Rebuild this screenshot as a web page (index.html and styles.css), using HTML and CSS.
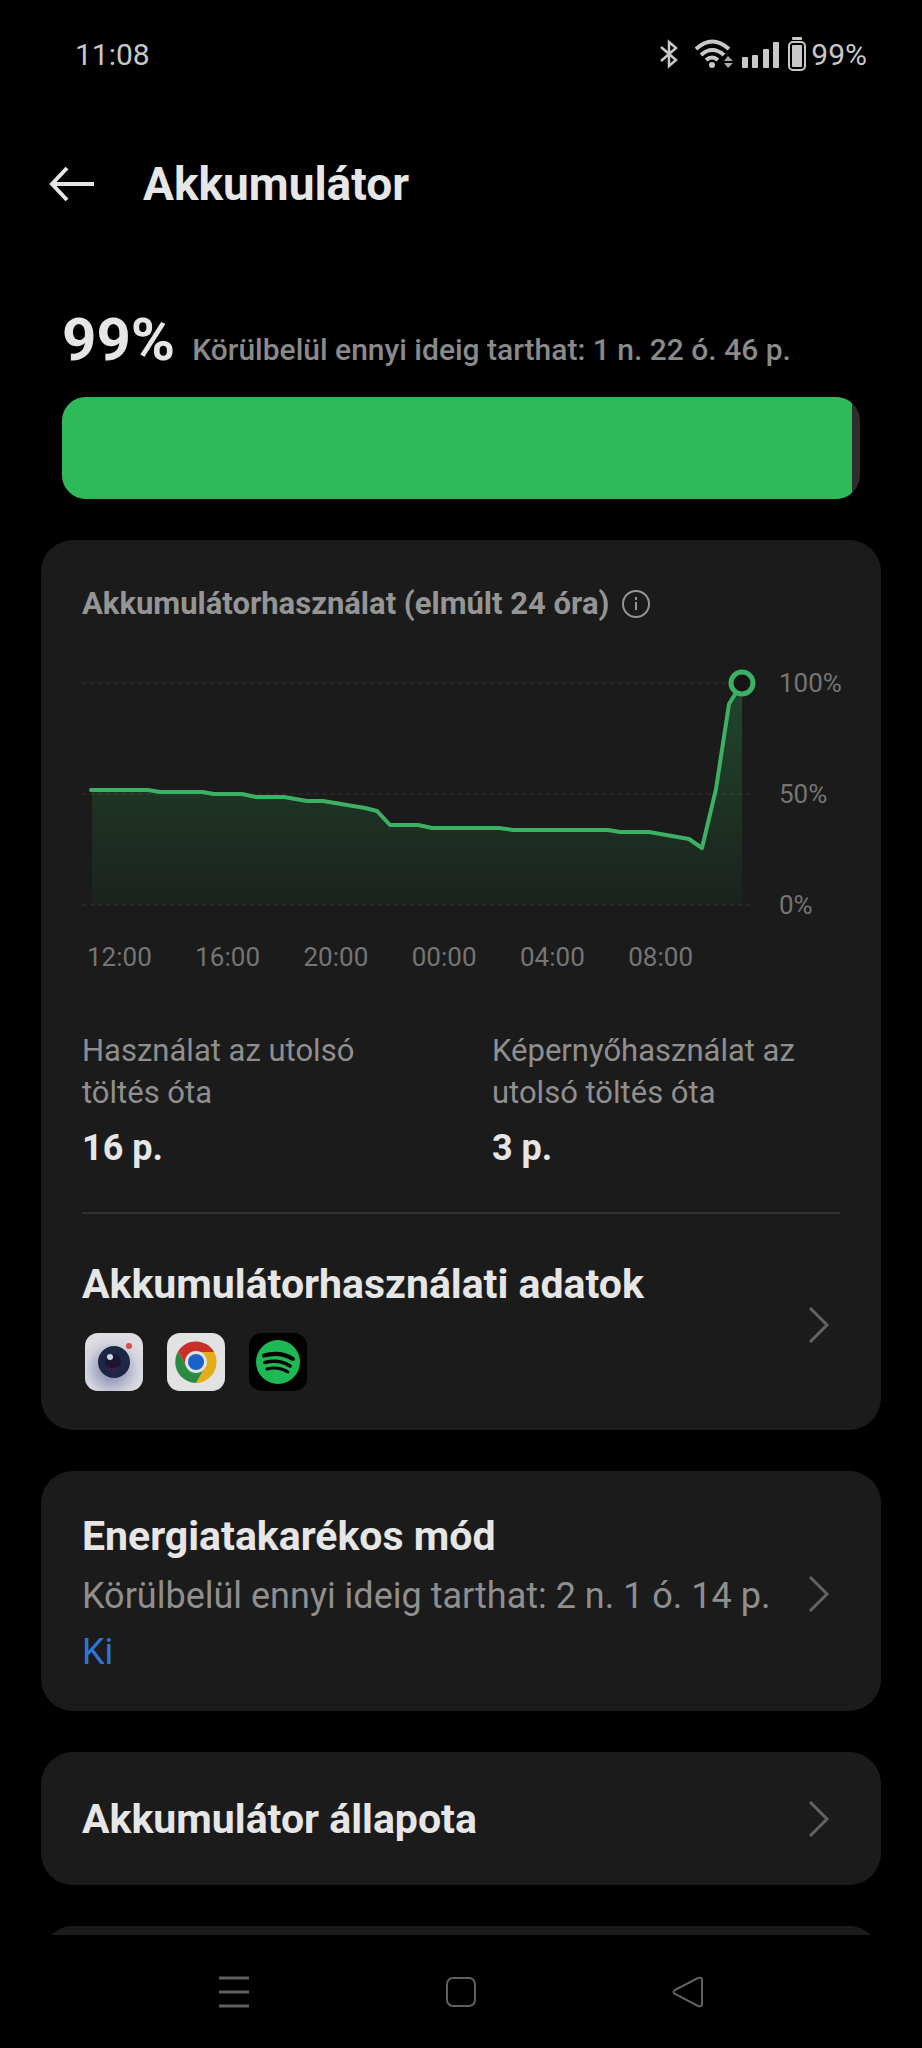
FILE: index.html
```html
<!DOCTYPE html>
<html lang="hu">
<head>
    <meta charset="UTF-8">
    <meta name="viewport" content="width=device-width, initial-scale=1.0">
    <title>Akkumulátor</title>
    <link rel="stylesheet" href="styles.css">
</head>
<body>
    <div class="status-bar">
        <span>11:08</span>
        <div class="status-icons">
            <svg class="bluetooth" width="20" height="30" viewBox="0 0 20 30" fill="none" stroke="currentColor" stroke-width="2.500">
                <path d="M2 8l15 13-7 6V3l7 6L2 22"/>
            </svg>
            <svg class="wifi" width="38" height="30" viewBox="0 0 38 30" fill="none" stroke="currentColor" stroke-width="4">
                <path d="M1 10Q17 -5 34 10M6 16Q17 6 29 16M11 21Q17 16 23 21"/>
                <circle cx="17" cy="26" r="3" fill="currentColor" stroke="none"/>
                <path d="M29 22l4-5 5 5zM29 24l4 5 5-5z" fill="#a8a8a8" stroke="none"/>
            </svg>
            <svg class="signal" width="38" height="30" viewBox="0 0 38 30" fill="currentColor">
                <rect x="0" y="18" width="6" height="11" rx="1"/>
                <rect x="10" y="16" width="6" height="13" rx="1"/>
                <rect x="21" y="10" width="6" height="19" rx="1"/>
                <rect x="31" y="3" width="6" height="26" rx="1"/>
            </svg>
            <svg class="battery" width="18" height="34" viewBox="0 0 18 34">
                <rect x="4" y="0" width="10" height="3" rx="1" fill="currentColor"/>
                <rect x="1" y="5" width="16" height="28" rx="4" fill="none" stroke="currentColor" stroke-width="2"/>
                <rect x="4" y="8" width="10" height="22" rx="1" fill="currentColor"/>
            </svg>
            <span>99%</span>
        </div>
    </div>

    <header>
        <button class="back" aria-label="Vissza">
            <svg width="46" height="36" viewBox="0 0 46 36" fill="none" stroke="currentColor" stroke-width="4">
                <path d="M46 18H4M19 2L4 18l15 16"/>
            </svg>
        </button>
        <h1>Akkumulátor</h1>
    </header>

    <main>
        <section class="level">
            <div class="level-text">
                <strong>99%</strong>
                <span>Körülbelül ennyi ideig tarthat: 1 n. 22 ó. 46 p.</span>
            </div>
            <div class="level-bar"><div class="level-fill" style="width: 99%"></div></div>
        </section>

        <section class="card usage">
            <h2>
                Akkumulátorhasználat (elmúlt 24 óra)
                <svg width="30" height="30" viewBox="0 0 30 30" fill="none" stroke="currentColor" stroke-width="2">
                    <circle cx="15" cy="15" r="13"/>
                    <path d="M15 13v8M15 8v3"/>
                </svg>
            </h2>
            <div class="chart">
                <div class="plot">
                    <svg viewBox="0 0 673 240">
                        <defs>
                            <linearGradient id="area" x1="0" y1="0" x2="0" y2="1">
                                <stop offset="0" stop-color="#2fba5a" stop-opacity="0.28"/>
                                <stop offset="1" stop-color="#2fba5a" stop-opacity="0.04"/>
                            </linearGradient>
                        </defs>
                        <path class="grid-line" d="M0 15H673M0 126H673M0 237H673"/>
                        <path fill="url(#area)" d="M10 122H66L78 124H120L132 126H160L174 129H202L225 133H241L283 140L295 143L308 157H336L350 160H417L431 162H526L538 164H567L607 171L620 180L634 121L647 36L660 15V237H10z"/>
                        <path class="line" d="M9 122H66L78 124H120L132 126H160L174 129H202L225 133H241L283 140L295 143L308 157H336L350 160H417L431 162H526L538 164H567L607 171L620 180L634 121L647 36L660 15"/>
                        <circle class="dot" cx="660" cy="15" r="11"/>
                    </svg>
                </div>
                <div class="y-axis">
                    <span>100%</span>
                    <span>50%</span>
                    <span>0%</span>
                </div>
                <div class="x-axis">
                    <span>12:00</span>
                    <span>16:00</span>
                    <span>20:00</span>
                    <span>00:00</span>
                    <span>04:00</span>
                    <span>08:00</span>
                </div>
            </div>
            <div class="stats">
                <div>
                    <h3>Használat az utolsó töltés óta</h3>
                    <p>16 p.</p>
                </div>
                <div>
                    <h3>Képernyőhasználat az utolsó töltés óta</h3>
                    <p>3 p.</p>
                </div>
            </div>
            <a href="#" class="row details">
                <div>
                    <h4>Akkumulátorhasználati adatok</h4>
                    <div class="apps">
                        <svg width="64" height="64" viewBox="0 0 64 64">
                            <defs>
                                <radialGradient id="cam" cx="0.46" cy="0.62" r="0.6">
                                    <stop offset="0.3" stop-color="#9a9fbd"/>
                                    <stop offset="0.75" stop-color="#d3d4de"/>
                                    <stop offset="1" stop-color="#dedee2"/>
                                </radialGradient>
                            </defs>
                            <rect x="3" y="3" width="58" height="58" rx="13" fill="url(#cam)"/>
                            <circle cx="32" cy="32" r="16" fill="#1d2745"/>
                            <circle cx="31" cy="32" r="8" fill="#1c1633"/>
                            <path d="M25 36q7 5 12-1-1 7-7 7-4-1-5-6z" fill="#3a1d49"/>
                            <circle cx="28" cy="27" r="3" fill="#c9d6e6"/>
                            <circle cx="47" cy="16" r="3" fill="#d3504c"/>
                        </svg>
                        <svg width="64" height="64" viewBox="0 0 64 64">
                            <rect x="3" y="3" width="58" height="58" rx="13" fill="#e2e2e2"/>
                            <path d="M32 22H50A21 21 0 0 1 32 53L41 37z" fill="#e4ac17"/>
                            <path d="M23 37L14 21.600A21 21 0 0 0 32 53L41 37z" fill="#2a8a43"/>
                            <path d="M14 21.600A21 21 0 0 1 50.200 22H32L23 37z" fill="#c8302a"/>
                            <circle cx="32" cy="32" r="11" fill="#e2e2e2"/>
                            <circle cx="32" cy="32" r="8" fill="#1b62c8"/>
                        </svg>
                        <svg width="64" height="64" viewBox="0 0 64 64">
                            <rect x="3" y="3" width="58" height="58" rx="13" fill="#000"/>
                            <circle cx="32" cy="32" r="22" fill="#1fb954"/>
                            <g fill="none" stroke="#000" stroke-linecap="round">
                                <path d="M18 25.500Q34 21 47 29" stroke-width="4"/>
                                <path d="M19 32.500Q33 29 44 36" stroke-width="3.500"/>
                                <path d="M21 39Q32 36 42 42" stroke-width="3"/>
                            </g>
                        </svg>
                    </div>
                </div>
                <svg class="chevron" viewBox="0 0 22 38"><path d="M2 2l17 17L2 36"/></svg>
            </a>
        </section>

        <a href="#" class="card row saver">
            <div>
                <h4>Energiatakarékos mód</h4>
                <p>Körülbelül ennyi ideig tarthat: 2 n. 1 ó. 14 p.</p>
                <p class="state">Ki</p>
            </div>
            <svg class="chevron" viewBox="0 0 22 38"><path d="M2 2l17 17L2 36"/></svg>
        </a>

        <a href="#" class="card row">
            <h4>Akkumulátor állapota</h4>
            <svg class="chevron" viewBox="0 0 22 38"><path d="M2 2l17 17L2 36"/></svg>
        </a>

        <div class="card row"></div>
    </main>

    <nav>
        <button aria-label="Legutóbbiak">
            <svg width="32" height="32" viewBox="0 0 32 32"><path d="M1 2H31M1 16H31M1 30H31" stroke-width="3"/></svg>
        </button>
        <button aria-label="Kezdőképernyő">
            <svg width="32" height="32" viewBox="0 0 32 32"><rect x="2" y="2" width="28" height="28" rx="6"/></svg>
        </button>
        <button aria-label="Vissza">
            <svg width="32" height="32" viewBox="0 0 32 32"><path d="M3 14L26 2q4-1 4 2v24q0 3-4 2L3 18q-3-2 0-4z"/></svg>
        </button>
    </nav>
</body>
</html>
```
FILE: styles.css
```css
* {
    box-sizing: border-box;
}
body {
    display: flex;
    flex-direction: column;
    height: 100vh;
    margin: 0;
    background: #000;
    color: #e6e6e6;
    font-family: Roboto, sans-serif;
}
h1, h2, h3, h4, p {
    margin: 0;
}
svg {
    display: block;
}
button {
    padding: 0;
    border: 0;
    background: none;
    color: inherit;
    cursor: pointer;
}
a {
    color: inherit;
    text-decoration: none;
}
.status-bar {
    display: flex;
    justify-content: space-between;
    align-items: center;
    height: 108px;
    padding: 0 55px 0 75px;
    color: #c8c8c8;
    font-size: 30px;
}
.status-icons {
    display: flex;
    align-items: center;
}
.bluetooth {
    margin-right: 16px;
}
.wifi {
    margin-right: 9px;
}
.signal {
    margin-right: 8px;
}
.battery {
    margin-right: 5px;
}
header {
    display: flex;
    align-items: center;
    gap: 49px;
    height: 152px;
    padding: 0 48px;
}
h1 {
    font-size: 46px;
    font-weight: 700;
}
main {
    flex: 1;
    min-height: 0;
    padding: 0 41px;
    overflow-y: auto;
    scrollbar-width: none;
}
.level {
    padding: 42px 21px 0;
}
.level-text {
    display: flex;
    align-items: baseline;
    gap: 17px;
    margin-bottom: 9px;
    line-height: 76px;
}
.level-text strong {
    font-size: 60px;
    font-weight: 700;
}
.level-text span {
    color: #8a8a8a;
    font-size: 30px;
    font-weight: 500;
}
.level-bar {
    height: 102px;
    border-radius: 24px;
    background: #2e2e2e;
    overflow: hidden;
}
.level-fill {
    height: 100%;
    background: #2fba5a;
}
.card {
    display: block;
    margin-top: 41px;
    padding: 0 41px;
    border-radius: 32px;
    background: #1b1b1b;
}
.usage {
    padding-top: 43px;
    padding-bottom: 36px;
}
h2 {
    display: flex;
    align-items: center;
    gap: 12px;
    color: #959595;
    font-size: 31px;
    font-weight: 700;
    line-height: 42px;
}
.chart {
    display: grid;
    grid-template-columns: 1fr 61px;
    column-gap: 24px;
    row-gap: 22px;
    margin-top: 43px;
    color: #757575;
    font-size: 26px;
    line-height: 30px;
}
.plot {
    margin-bottom: 12px;
}
.plot svg {
    width: 100%;
    overflow: visible;
}
.grid-line {
    fill: none;
    stroke: #262626;
    stroke-width: 2;
    stroke-dasharray: 5 3;
}
.line {
    fill: none;
    stroke: #3db163;
    stroke-width: 4;
    stroke-linecap: round;
    stroke-linejoin: round;
}
.dot {
    fill: #151515;
    stroke: #3db163;
    stroke-width: 5;
}
.y-axis {
    display: flex;
    flex-direction: column;
    justify-content: space-between;
}
.x-axis {
    display: flex;
    justify-content: space-between;
    padding: 0 62px 0 5px;
}
.stats {
    display: grid;
    grid-template-columns: 1fr 1fr;
    gap: 62px;
    margin-top: 58px;
    padding-bottom: 43px;
    border-bottom: 2px solid #303030;
}
.stats h3 {
    color: #8f8f8f;
    font-size: 31px;
    font-weight: 400;
    line-height: 42px;
}
.stats p {
    margin-top: 13px;
    font-size: 36px;
    font-weight: 700;
    line-height: 42px;
}
.row {
    display: flex;
    justify-content: space-between;
    align-items: center;
    min-height: 133px;
}
.details {
    padding-top: 42px;
}
h4 {
    font-size: 41px;
    font-weight: 700;
    line-height: 56px;
}
.apps {
    display: flex;
    gap: 18px;
    margin-top: 18px;
}
.chevron {
    flex: none;
    width: 22px;
    height: 38px;
    margin-right: 10px;
    fill: none;
    stroke: #626262;
    stroke-width: 3;
}
.saver {
    padding-top: 37px;
    padding-bottom: 31px;
}
.saver p {
    color: #8f8f8f;
    font-size: 36px;
    line-height: 56px;
}
.saver h4 {
    margin-bottom: 4px;
}
.saver .state {
    color: #2f74d8;
}
nav {
    display: flex;
    justify-content: space-between;
    height: 113px;
    padding: 0 218px;
    background: #000;
}
nav svg {
    fill: none;
    stroke: #606060;
    stroke-width: 2;
}
```
